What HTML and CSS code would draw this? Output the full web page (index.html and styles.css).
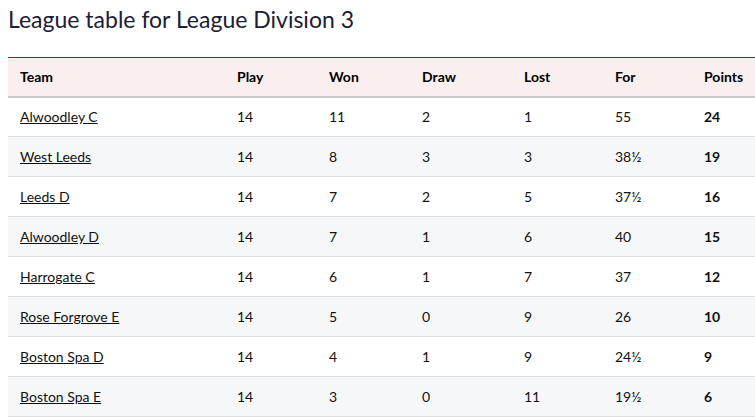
FILE: index.html
```html
<!DOCTYPE html>
<html lang="en">
  <head>
    <meta charset="UTF-8" />
    <title>League Division 3</title>
    <link rel="stylesheet" href="styles.css">
  </head>
  <body>
    <h1 class="page-title">League table for League Division 3</h1>

    <table class="league-table">
      <colgroup>
        <col class="col-team" />
        <col class="col-play" />
        <col class="col-won" />
        <col class="col-draw" />
        <col class="col-lost" />
        <col class="col-for" />
        <col class="col-points" />
      </colgroup>
      <thead>
        <tr>
          <th>Team</th>
          <th>Play</th>
          <th>Won</th>
          <th>Draw</th>
          <th>Lost</th>
          <th>For</th>
          <th>Points</th>
        </tr>
      </thead>
      <tbody>
        <tr>
          <td><a href="#">Alwoodley C</a></td>
          <td>14</td><td>11</td><td>2</td><td>1</td><td>55</td>
          <td class="points">24</td>
        </tr>
        <tr>
          <td><a href="#">West Leeds</a></td>
          <td>14</td><td>8</td><td>3</td><td>3</td><td>38½</td>
          <td class="points">19</td>
        </tr>
        <tr>
          <td><a href="#">Leeds D</a></td>
          <td>14</td><td>7</td><td>2</td><td>5</td><td>37½</td>
          <td class="points">16</td>
        </tr>
        <tr>
          <td><a href="#">Alwoodley D</a></td>
          <td>14</td><td>7</td><td>1</td><td>6</td><td>40</td>
          <td class="points">15</td>
        </tr>
        <tr>
          <td><a href="#">Harrogate C</a></td>
          <td>14</td><td>6</td><td>1</td><td>7</td><td>37</td>
          <td class="points">12</td>
        </tr>
        <tr>
          <td><a href="#">Rose Forgrove E</a></td>
          <td>14</td><td>5</td><td>0</td><td>9</td><td>26</td>
          <td class="points">10</td>
        </tr>
        <tr>
          <td><a href="#">Boston Spa D</a></td>
          <td>14</td><td>4</td><td>1</td><td>9</td><td>24½</td>
          <td class="points">9</td>
        </tr>
        <tr>
          <td><a href="#">Boston Spa E</a></td>
          <td>14</td><td>3</td><td>0</td><td>11</td><td>19½</td>
          <td class="points">6</td>
        </tr>
      </tbody>
    </table>
  </body>
</html>
```

FILE: styles.css
```css
/* Basic Reset */
* {
  box-sizing: border-box;
}

html,
body {
  overflow: hidden;
}

body {
  margin: 8px 0 0 8px;
  font-family: "Lato", "Liberation Sans", sans-serif;
  color: #111111;
  background: #ffffff;
}

.page-title {
  margin: 0 0 27px;
  font-size: 23px;
  font-weight: 400;
  line-height: 22px;
  color: #1c2035;
}

/* League table */
.league-table {
  width: 100%;
  table-layout: fixed;
  border-collapse: collapse;
  font-size: 14px;
}

.col-team { width: 217px; }
.col-play { width: 92px; }
.col-won { width: 93px; }
.col-draw { width: 102px; }
.col-lost { width: 91px; }
.col-for { width: 89px; }

.league-table thead tr {
  background: #f9efee;
  border-top: 1px solid #7b2530;
  border-bottom: 2px solid #c9c9cc;
}

.league-table th {
  height: 39px;
  padding: 0 12px;
  text-align: left;
  font-weight: 700;
  color: #000000;
  white-space: nowrap;
}

.league-table td {
  height: 40px;
  padding: 0 12px;
  border-bottom: 1px solid #dedfe2;
}

.league-table tbody tr:nth-child(even) {
  background: #f6f7f9;
}

.league-table a {
  color: #111111;
  text-decoration: underline;
}

.points {
  font-weight: 700;
}
```
